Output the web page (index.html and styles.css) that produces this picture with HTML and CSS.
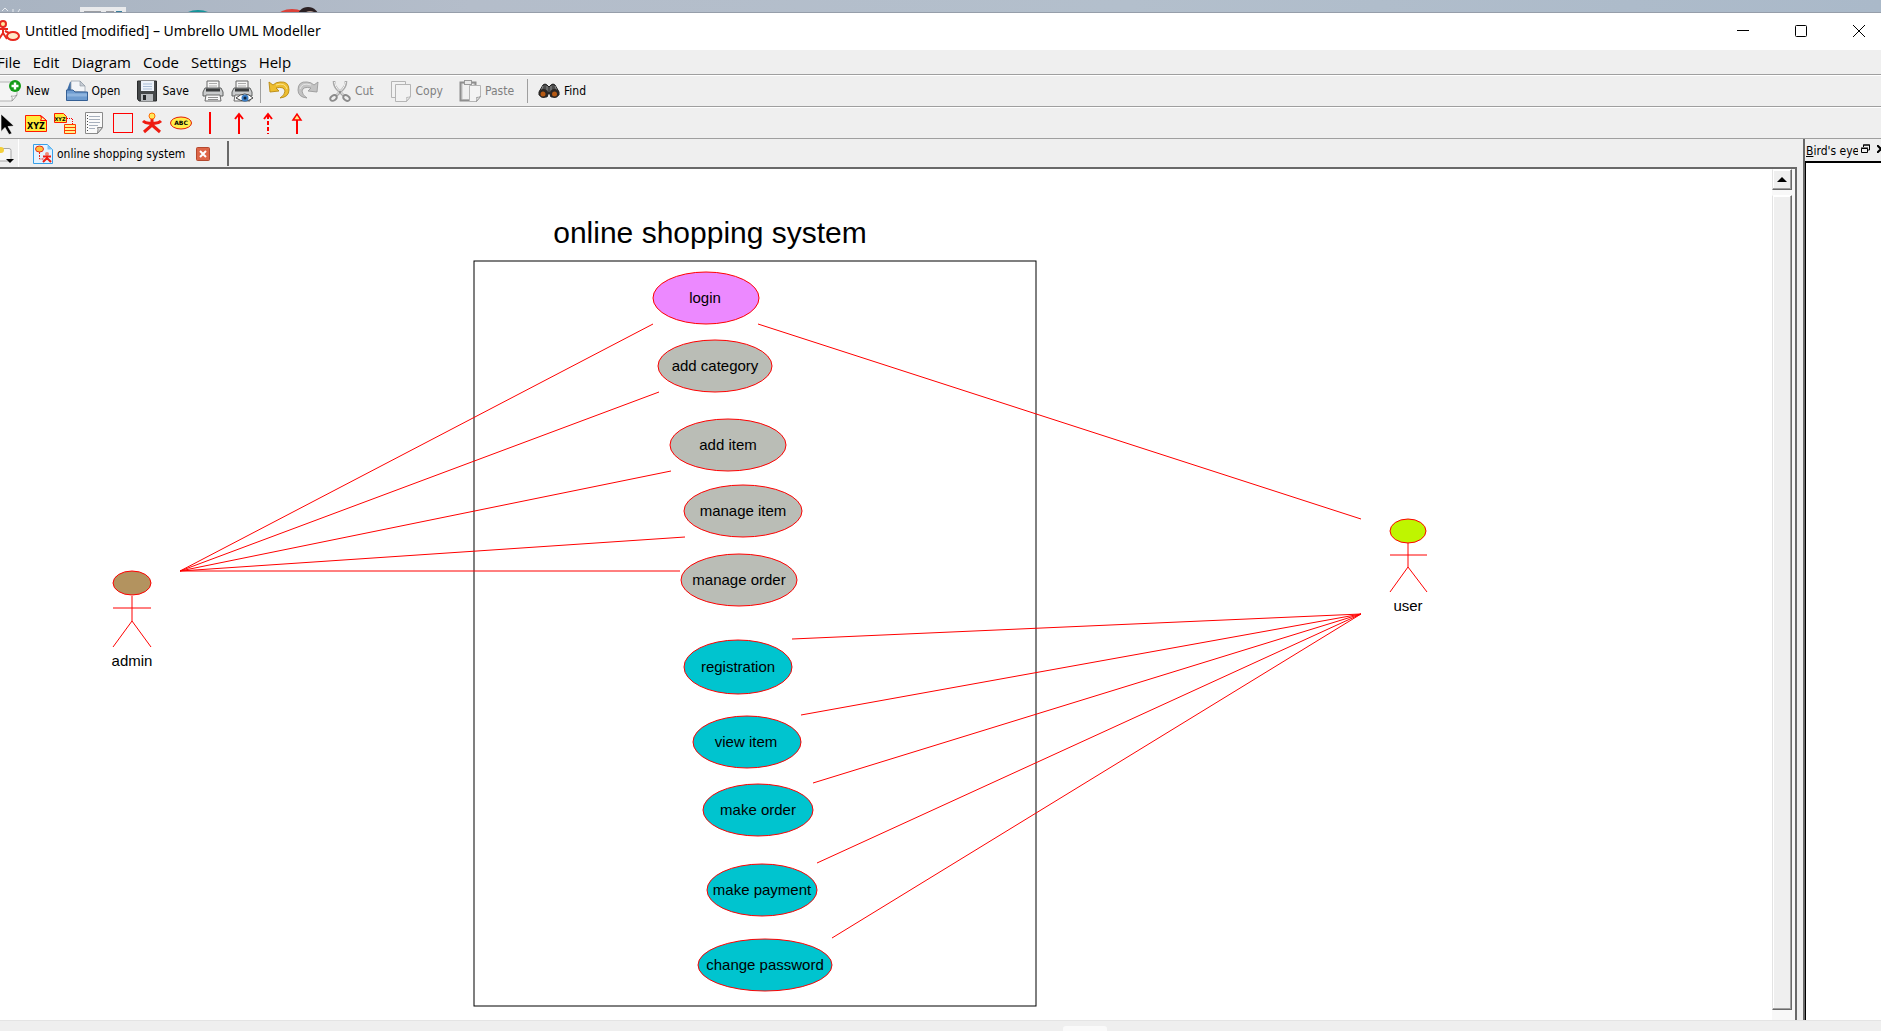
FILE: index.html
```html
<!DOCTYPE html>
<html lang="en">
<head>
<meta charset="utf-8">
<title>Untitled [modified] – Umbrello UML Modeller</title>
<link rel="stylesheet" href="styles.css">
</head>
<body>
<div class="desktop" aria-hidden="true">
  <svg class="desktop-art" width="400" height="12">
    <path d="M2 11l3-3 3 3M13 12V9M18 12l2-3" stroke="#e8ecf0" fill="none"/>
    <rect x="80" y="7" width="46" height="5" fill="#e9eaec"/>
    <path d="M84 12h17M106 12h8" stroke="#4d5158"/>
    <path d="M116 12h5v-1" stroke="#3a7f9c" stroke-width="2" fill="none"/>
    <ellipse cx="198" cy="18" rx="15" ry="8" fill="#15949a"/>
    <ellipse cx="292" cy="16" rx="14" ry="7" fill="#dc4038"/>
    <circle cx="308" cy="18" r="11" fill="#2b2023"/>
    <path d="M306 12q4-2 8 0z" fill="#b39a92"/>
  </svg>
</div>

<header class="titlebar">
  <svg class="app-icon" width="22" height="22" viewBox="0 0 22 22" fill="none" stroke="#e8281e" stroke-width="2">
    <circle cx="5" cy="4" r="3" fill="#ffe9a0"/>
    <path d="M5 7v6M0 9h10M5 13l-4 6M5 13l4 6M7 11l8 4"/>
    <ellipse cx="15" cy="16" rx="6" ry="4" fill="#ffe9c8"/>
  </svg>
  <h1 class="window-title">Untitled [modified] – Umbrello UML Modeller</h1>
  <div class="window-controls">
    <button class="window-button" aria-label="Minimize"><svg width="12" height="12"><path d="M0 5.500h12" stroke="#000"/></svg></button>
    <button class="window-button" aria-label="Maximize"><svg width="12" height="12"><rect x=".5" y=".5" width="11" height="11" rx="1" fill="none" stroke="#000"/></svg></button>
    <button class="window-button" aria-label="Close"><svg width="12" height="12"><path d="M0 0l12 12M12 0L0 12" stroke="#000"/></svg></button>
  </div>
</header>

<nav class="menubar" aria-label="Main menu">
  <button class="menu">File</button>
  <button class="menu">Edit</button>
  <button class="menu">Diagram</button>
  <button class="menu">Code</button>
  <button class="menu">Settings</button>
  <button class="menu">Help</button>
</nav>

<div class="toolbar" role="toolbar" aria-label="Main toolbar">
  <button class="tool"><svg class="icon" viewBox="0 0 22 22">
    <path d="M-2 2h19v13l-5 6H-2z" fill="#f4f4f4" stroke="#b4b4b4"/><path d="M17 15l-5 6q1-4-1-5 3 1 6-1z" fill="#fff" stroke="#8d8d8d" stroke-width=".7"/>
    <circle cx="15" cy="6" r="6" fill="#139b17"/><path d="M15 2.500v7M11.500 6h7" stroke="#fff" stroke-width="2.400"/></svg>New</button>
  <button class="tool"><svg class="icon" viewBox="0 0 22 22">
    <path d="M1 10l3-8h3v8z" fill="#3d6ea8"/><path d="M5 11V1h9l5 5v6z" fill="#f3f5f8" stroke="#9aa3ae" stroke-width=".8"/><path d="M14 1v5h5z" fill="#c6ccd4" stroke="#8993a0" stroke-width=".6"/>
    <path d="M.5 10H7l2 2h12.500v8.500H.5z" fill="#6e9cd0" stroke="#345f94"/><path d="M1 15h20" stroke="#8fb5df" stroke-width="3"/></svg>Open</button>
  <button class="tool"><svg class="icon" viewBox="0 0 22 22">
    <path d="M1.500 1h19v20H3l-1.500-2z" fill="#454849" stroke="#292b2c"/><rect x="5" y="1" width="13" height="10" fill="#eef3fa"/><path d="M7 4h9M7 6.500h9M7 9h9" stroke="#a9bdd6"/>
    <rect x="5" y="14" width="12" height="7" fill="#b9bcbf"/><rect x="7" y="15" width="3" height="5" fill="#26282a"/></svg>Save</button>
  <button class="tool icon-only" aria-label="Print"><svg class="icon" viewBox="0 0 22 22">
    <path d="M5 9V1h12v8" fill="#f6f6f6" stroke="#666"/><path d="M7 3.500h8M7 6h8" stroke="#aaa"/><path d="M3 8h16l2 4v4H1v-4z" fill="#c9cbcc" stroke="#5e6060"/><path d="M4 10h14" stroke="#3b3d3e" stroke-width="3"/>
    <path d="M4 15h14l1 6H3z" fill="#f7f7f7" stroke="#6b6b6b"/><path d="M6 17.500h10M6 19.500h10" stroke="#8f8f8f"/></svg></button>
  <button class="tool icon-only" aria-label="Print preview"><svg class="icon" viewBox="0 0 22 22">
    <path d="M5 9V1h12v8" fill="#f6f6f6" stroke="#666"/><path d="M7 3.500h8M7 6h8" stroke="#aaa"/><path d="M3 8h16l2 4v4H1v-4z" fill="#c9cbcc" stroke="#5e6060"/><path d="M4 10h14" stroke="#3b3d3e" stroke-width="3"/>
    <path d="M4 15h14l1 6H3z" fill="#f7f7f7" stroke="#6b6b6b"/><path d="M5 18q9-8 17 0-8 6-17 0z" fill="#fff" stroke="#444"/><circle cx="14" cy="18" r="3.500" fill="#3c7fc6"/><circle cx="14" cy="18" r="1.500" fill="#10233c"/></svg></button>
  <span class="separator"></span>
  <button class="tool icon-only" aria-label="Undo"><svg class="icon" viewBox="0 0 22 22">
    <path d="M1 2l1 10 9-1-3-3q8-2 9 3 0 4-5 7 9-1 9-8 0-9-9-8-4 0-7 3z" fill="#edbd2e" stroke="#b98a12" stroke-width=".9"/><path d="M8 5q9-3 11 4" stroke="#fbe48e" fill="none"/></svg></button>
  <button class="tool icon-only" aria-label="Redo" disabled><svg class="icon" viewBox="0 0 22 22">
    <path d="M21 2l-1 10-9-1 3-3q-8-2-9 3 0 4 5 7-9-1-9-8 0-9 9-8 4 0 7 3z" fill="#c3c3c3" stroke="#9b9b9b" stroke-width=".9"/><path d="M14 5Q5 2 3 9" stroke="#e6e6e6" fill="none"/></svg></button>
  <button class="tool" disabled><svg class="icon" viewBox="0 0 22 22" fill="none">
    <path d="M5 1q0 5 3 8l7 7M17 1q0 5-3 8l-7 7" stroke="#a9a9a9" stroke-width="2.600"/><path d="M5.500 2q1 5 3 7l6 6M16.500 2q-1 5-3 7l-6 6" stroke="#f6f6f6"/>
    <circle cx="11" cy="12" r="1" fill="#777"/><ellipse cx="4.500" cy="18" rx="3.500" ry="2.500" stroke="#8b8b8b" stroke-width="1.800" transform="rotate(-35 4.500 18)"/><ellipse cx="17.500" cy="18" rx="3.500" ry="2.500" stroke="#8b8b8b" stroke-width="1.800" transform="rotate(35 17.500 18)"/></svg>Cut</button>
  <button class="tool" disabled><svg class="icon" viewBox="0 0 22 22" fill="#f2f2f2" stroke="#b5b5b5">
    <path d="M1.500 1.500h14v16h-14z"/><path d="M5.500 4.500h15v12l-4 5h-11z"/><path d="M20.500 16.500l-4 5q1-3 0-4 2 0 4-1z" fill="#fff"/></svg>Copy</button>
  <button class="tool" disabled><svg class="icon" viewBox="0 0 22 22">
    <path d="M1.500 2.500h15v18h-15z" fill="#d8d8d8" stroke="#8e8e8e" stroke-width="2"/><path d="M4 4h10v15H4z" fill="#f0f0f0"/><rect x="5.500" y=".5" width="7" height="4" fill="#e9e9e9" stroke="#999"/>
    <path d="M10.500 5.500h11v11l-4 5h-7z" fill="#f3f3f3" stroke="#b5b5b5"/><path d="M21.500 16.500l-4 5q1-3 0-4 2 0 4-1z" fill="#fff" stroke="#999"/></svg>Paste</button>
  <span class="separator"></span>
  <button class="tool"><svg class="icon" viewBox="0 0 22 22">
    <path d="M1 12L5 5q2-2 4 0l2 2 2-2q2-2 4 0l4 7v3l-8 2-2-5-2 5-8-2z" fill="#4c4c4c" stroke="#1c1c1c"/><path d="M5 6l-2 5M17 6l2 5M9 6v5M13 6v5" stroke="#8d8d8d"/>
    <circle cx="5.500" cy="13.500" r="4.500" fill="#2b2725"/><circle cx="16.500" cy="13.500" r="4.500" fill="#2b2725"/><circle cx="5" cy="14" r="2.500" fill="#b65a14"/><circle cx="16.500" cy="14" r="2.500" fill="#b65a14"/></svg>Find</button>
</div>

<div class="toolbar diagram-tools" role="toolbar" aria-label="Diagram toolbar">
  <button class="shape" aria-label="Select"><svg class="icon" viewBox="0 0 22 22"><path d="M5 2l13 12-6 .5 4 7-3 1-4-7-4 4z" fill="#000" stroke="#fff" stroke-width=".6"/></svg></button>
  <button class="shape" aria-label="Note label"><svg class="icon" viewBox="0 0 22 22"><path d="M.5 3.500h15l6 5v11H.5z" fill="#ffeb3c" stroke="#ff1a00"/><path d="M15.500 3.500q2 3 0 5h6z" fill="#fff8a0" stroke="#f00"/><text class="glyph-xyz" x="11" y="17">XYZ</text></svg></button>
  <button class="shape" aria-label="Anchored note"><svg class="icon" viewBox="0 0 22 22"><path d="M.5 1.500h9l3 3v6H.5z" fill="#ffeb3c" stroke="#ff1a00"/><text class="glyph-tiny" x="6" y="9">XYZ</text><path d="M13 6.500h5.500V12" fill="none" stroke="#f00" stroke-dasharray="1 1"/><path d="M10.500 12.500h11v9h-11zM10.500 15.500h11M10.500 18.500h11" fill="#fff38c" stroke="#ff3b00"/></svg></button>
  <button class="shape" aria-label="Note"><svg class="icon" viewBox="0 0 22 22"><path d="M2.500.5h17v15l-5 6h-12z" fill="#fafafa" stroke="#8a8a8a"/><path d="M6 4.500h11M6 7.500h11M6 10.500h11M6 13.500h9M6 16.500h6" stroke="#a7b0bd"/><path d="M4.500 3v16" stroke="#444" stroke-dasharray="1 2"/><path d="M19.500 15.500l-5 6q1-5 0-6z" fill="#ddd" stroke="#888"/></svg></button>
  <button class="shape" aria-label="Box"><svg class="icon" viewBox="0 0 22 22"><rect x="1.500" y="1.500" width="19" height="19" fill="none" stroke="#f00"/></svg></button>
  <button class="shape" aria-label="Actor"><svg class="icon" viewBox="0 0 22 22"><path d="M11 7v7M2 9q3 3 9 2 6 1 9-2M11 13l-8 7M11 13l8 7" fill="none" stroke="#ee1c12" stroke-width="3"/><circle cx="11" cy="4" r="3" fill="#ffe95c" stroke="#ff6a00"/></svg></button>
  <button class="shape" aria-label="Use case"><svg class="icon" viewBox="0 0 22 22"><ellipse cx="11" cy="11" rx="10.500" ry="6" fill="#ffee4a" stroke="#e51b00"/><text class="glyph-abc" x="11" y="13">ABC</text></svg></button>
  <button class="shape" aria-label="Association"><svg class="icon" viewBox="0 0 22 22"><path d="M11 0v22" stroke="#f00" stroke-width="2"/></svg></button>
  <button class="shape" aria-label="Directional association"><svg class="icon" viewBox="0 0 22 22"><path d="M11 2v20M7 7l4-5 4 5" fill="none" stroke="#f00" stroke-width="2"/></svg></button>
  <button class="shape" aria-label="Dependency"><svg class="icon" viewBox="0 0 22 22" fill="none" stroke="#f00" stroke-width="2"><path d="M7 7l4-5 4 5"/><path d="M11 3v19" stroke-dasharray="4 2"/></svg></button>
  <button class="shape" aria-label="Generalization"><svg class="icon" viewBox="0 0 22 22"><path d="M11 8v14" stroke="#f00" stroke-width="2"/><path d="M7 8l4-6 4 6z" fill="#ffee8a" stroke="#f00" stroke-width="1.500"/></svg></button>
</div>

<main class="workspace">
  <section class="document">
    <div class="tabs">
      <button class="new-tab" aria-label="New diagram"><svg width="16" height="20" viewBox="0 0 16 20"><path d="M0 3.500h9q2 0 2 2V16H0" fill="#f7f7f7" stroke="#a5a5a5"/><circle cx="1" cy="5" r="3" fill="#f3d03c"/><path d="M6 14h8l-4 4z" fill="#000"/></svg></button>
      <div class="tab">
        <svg class="tab-icon" width="20" height="20" viewBox="0 0 20 20"><path d="M.5.500h14l5 5v14H.5z" fill="#e4f3ff" stroke="#37a0e8"/><path d="M14.500.500v5h5z" fill="#7cc4f5"/><ellipse cx="6.500" cy="5" rx="4" ry="3" fill="#ffc23a" stroke="#e8281e"/><path d="M6.500 8v7h4" fill="none" stroke="#e8281e" stroke-dasharray="2 1"/><circle cx="14" cy="10" r="2" fill="#f08a78"/><path d="M10 12.500h8M14 12v2l-4 4M14 14l4 4" fill="none" stroke="#ee1c12" stroke-width="2"/></svg>
        <span class="tab-label">online shopping system</span>
        <button class="tab-close" aria-label="Close tab"><svg width="14" height="14"><rect x=".5" y=".5" width="13" height="13" rx="1" fill="#dd6547" stroke="#b4492f"/><path d="M4 4l6 6M10 4l-6 6" stroke="#fff" stroke-width="2"/></svg></button>
      </div>
    </div>
    <div class="view">
      <svg class="diagram" role="img" aria-label="Use case diagram">
        <rect class="boundary" x="474" y="92" width="562" height="745"/>
        <text class="heading" x="710" y="74">online shopping system</text>
        <g class="link">
          <path d="M180 402L653 155M180 402L659 223M180 402L671 302M180 402L685 368M180 402H680"/>
          <path d="M758 155L1361 350"/>
          <path d="M1361 445L792 470M1361 445L801 546M1361 445L813 614M1361 445L817 694M1361 445L832 769"/>
        </g>
        <g class="case login"><ellipse cx="706" cy="129" rx="53" ry="26"/><text x="705" y="134">login</text></g>
        <g class="case staff">
          <ellipse cx="715" cy="197" rx="57" ry="26"/><text x="715" y="202">add category</text>
          <ellipse cx="728" cy="276" rx="58" ry="26"/><text x="728" y="281">add item</text>
          <ellipse cx="743" cy="342" rx="59" ry="26"/><text x="743" y="347">manage item</text>
          <ellipse cx="739" cy="411" rx="58" ry="26"/><text x="739" y="416">manage order</text>
        </g>
        <g class="case customer">
          <ellipse cx="738" cy="498" rx="54" ry="27"/><text x="738" y="503">registration</text>
          <ellipse cx="747" cy="573" rx="54" ry="26"/><text x="746" y="578">view item</text>
          <ellipse cx="758" cy="641" rx="55" ry="26"/><text x="758" y="646">make order</text>
          <ellipse cx="762" cy="721" rx="55" ry="26"/><text x="762" y="726">make payment</text>
          <ellipse cx="765" cy="796" rx="67" ry="26"/><text x="765" y="801">change password</text>
        </g>
        <g class="actor admin"><ellipse cx="132" cy="414" rx="19" ry="12"/><path d="M132 427v25M113 439h38M113 478l19-26 19 26"/><text x="132" y="497">admin</text></g>
        <g class="actor user"><ellipse cx="1408" cy="362" rx="18" ry="12"/><path d="M1408 374v24M1390 386h37M1390 423l18-25 19 25"/><text x="1408" y="442">user</text></g>
      </svg>
      <div class="scrollbar">
        <button class="scroll-up" aria-label="Scroll up"><svg width="10" height="5"><path d="M5 0l5 5H0z"/></svg></button>
        <div class="thumb"></div>
      </div>
    </div>
  </section>
  <aside class="dock">
    <div class="dock-title">
      <h2 class="dock-name"><u>B</u>ird's eye</h2>
      <button class="dock-button" aria-label="Float"><svg width="9" height="10" fill="none" stroke="#000"><path d="M2.500 3V1h6v5H6M2 1h7"/><path d="M.5 4.500h6v4h-6zM0 4h7"/></svg></button>
      <button class="dock-button" aria-label="Close panel"><svg width="8" height="8"><path d="M0 0l8 8M8 0L0 8" stroke="#000" stroke-width="2"/></svg></button>
    </div>
    <div class="dock-view"></div>
  </aside>
</main>
<footer class="taskbar"><div class="taskbar-item"></div></footer>
</body>
</html>
```
FILE: styles.css
```css
* { box-sizing: border-box; }
body {
  margin: 0;
  height: 100vh;
  display: flex;
  flex-direction: column;
  overflow: hidden;
  background: #efefef;
  color: #000;
  font: 12px/16px "DejaVu Sans Condensed", "DejaVu Sans", sans-serif;
}
button { margin: 0; padding: 0; border: 0; background: none; color: inherit; font: inherit; }
svg { display: block; flex: none; }

.desktop {
  flex: none;
  height: 13px;
  border-bottom: 1px solid #969eaa;
  background: linear-gradient(90deg, #a9b4c2, #b4bdca 25%, #b3bfcc 60%, #aab9c9);
}

.titlebar {
  flex: none;
  height: 37px;
  display: flex;
  align-items: center;
  padding-bottom: 1px;
  background: #fff;
  font-family: "Noto Sans", sans-serif;
}
.app-icon { margin-left: -2px; }
.window-title { flex: 1; margin: 0 0 0 5px; font-size: 14px; line-height: 20px; font-weight: 400; }
.window-controls { display: flex; gap: 46px; padding-right: 16px; }
.window-button { width: 12px; height: 12px; }

.menubar {
  flex: none;
  height: 24px;
  display: flex;
  align-items: center;
  gap: 12px;
  margin-left: -3px;
  font: 15px/20px "Open Sans", "Noto Sans", sans-serif;
}

.toolbar {
  flex: none;
  height: 32px;
  display: flex;
  align-items: center;
  border-top: 1px solid #9f9f9f;
  box-shadow: inset 0 1px #fff;
}
.tool { display: flex; align-items: center; gap: 4px; height: 24px; margin-top: 1px; padding: 0 10px 0 6px; }
.tool:first-child { padding-left: 0; }
.tool.icon-only { padding: 0 4px 0 3px; }
.tool:disabled { color: #7f7f7f; }
.icon { width: 22px; height: 22px; overflow: visible; }
.separator { width: 1px; height: 24px; margin: 0 4px 0 3px; background: #9f9f9f; }

.diagram-tools { gap: 7px; }
.diagram-tools .shape:first-child { margin-left: -4px; }
.shape { width: 22px; height: 22px; }
.glyph-xyz, .glyph-abc, .glyph-tiny { font-weight: 700; font-family: "DejaVu Sans", sans-serif; text-anchor: middle; }
.glyph-xyz { font-size: 8px; }
.glyph-abc { font-size: 6px; }
.glyph-tiny { font-size: 5px; }

.workspace { flex: 1; min-height: 0; display: flex; border-top: 1px solid #9f9f9f; }

.document {
  flex: 1;
  min-width: 0;
  display: flex;
  flex-direction: column;
}
.tabs { flex: none; height: 28px; display: flex; }
.new-tab { width: 19px; padding-top: 4px; border-right: 1px solid #fff; }
.tab {
  display: flex;
  align-items: center;
  height: 25px;
  margin-top: 2px;
  padding: 0 17px 0 14px;
  border-right: 2px solid #696969;
}
.tab-icon { margin-right: 4px; }
.tab-label { min-width: 132px; }
.tab-close { margin-left: 7px; }

.view {
  flex: 1;
  min-height: 0;
  display: flex;
  margin-right: 6px;
  border-top: 2px solid #696969;
  border-right: 2px solid #696969;
  background: #fff;
}
.diagram { flex: 1; min-width: 0; height: 100%; font: 15px "Liberation Sans", Arial, sans-serif; }
.diagram text { text-anchor: middle; }
.boundary { fill: none; stroke: #000; }
.diagram .heading { font-size: 30px; }
.link, .actor path { fill: none; stroke: #f00; }
.diagram ellipse { stroke: #f00; }
.login ellipse { fill: #ec89ff; }
.staff ellipse { fill: #babdb6; }
.customer ellipse { fill: #00c4cf; }
.admin ellipse { fill: #b3935f; }
.user ellipse { fill: #bff500; }

.scrollbar {
  flex: none;
  width: 23px;
  padding: 0 3px 10px 0;
  display: flex;
  flex-direction: column;
  gap: 5px;
  background: #f8f8f8;
}
.scroll-up, .thumb {
  border: 1px solid;
  border-color: #fff #696969 #696969 #e3e3e3;
  background: #efefef;
  box-shadow: inset -1px -1px #a0a0a0, inset 1px 1px #fff;
}
.scroll-up { height: 21px; display: flex; align-items: center; justify-content: center; }
.thumb { flex: 1; }

.dock { flex: none; width: 78px; overflow: hidden; border-left: 2px solid #696969; display: flex; flex-direction: column; }
.dock-title { flex: none; height: 22px; display: flex; align-items: center; padding: 2px 0 0 1px; }
.dock-name { flex: none; width: 52px; margin: 0 3px 0 0; overflow: hidden; white-space: nowrap; font: inherit; }
.dock-button { margin: 0 7px 4px 0; flex: none; }
.dock-view { flex: 1; border-top: 2px solid #000; border-left: 1px solid #000; background: #fff; }

.taskbar { flex: none; height: 11px; padding-top: 5px; border-top: 1px solid #e4e4e4; background: #efefef; }
.taskbar-item { width: 44px; height: 5px; margin-left: 56.500%; border-radius: 3px 3px 0 0; background: #fafafa; }
```
